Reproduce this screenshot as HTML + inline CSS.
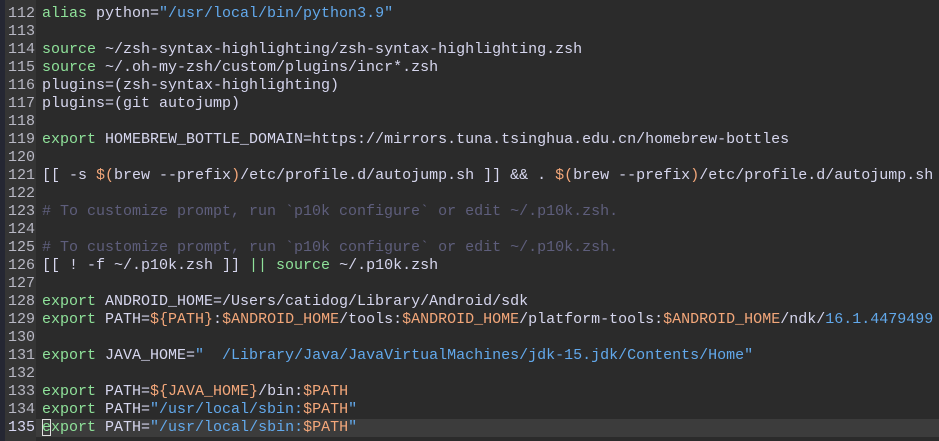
<html><head><style>
body{margin:0;width:939px;height:441px;background:#2b2b2b;overflow:hidden;font-family:"Liberation Mono",monospace;font-size:15px;}
#strip{position:absolute;left:0;top:0;width:5px;height:441px;background:#252733}
#gut{position:absolute;left:5px;top:0;width:31px;height:441px;background:#353535}
.l{position:absolute;left:0;width:939px;height:18px;line-height:18px;white-space:pre;color:#d6d6ee}
.n{position:absolute;left:7px;width:28px;text-align:right;color:#b8b8c4}
.t{position:absolute;left:42px}
.k{color:#8fe29a}.s{color:#62a9ec}.o{color:#f3a77a}.c{color:#5e5e7c}
.cur{background:#3c3c3c}
</style></head><body>
<div id="strip"></div><div id="gut"></div>
<div class="l" style="top:5px"><span class="n">112</span><span class="t"><span class="k">alias</span> python=<span class="s">"/usr/local/bin/python3.9"</span></span></div>
<div class="l" style="top:23px"><span class="n">113</span></div>
<div class="l" style="top:41px"><span class="n">114</span><span class="t"><span class="k">source</span> ~/zsh-syntax-highlighting/zsh-syntax-highlighting.zsh</span></div>
<div class="l" style="top:59px"><span class="n">115</span><span class="t"><span class="k">source</span> ~/.oh-my-zsh/custom/plugins/incr*.zsh</span></div>
<div class="l" style="top:77px"><span class="n">116</span><span class="t">plugins=(zsh-syntax-highlighting)</span></div>
<div class="l" style="top:95px"><span class="n">117</span><span class="t">plugins=(git autojump)</span></div>
<div class="l" style="top:113px"><span class="n">118</span></div>
<div class="l" style="top:131px"><span class="n">119</span><span class="t"><span class="k">export</span> HOMEBREW_BOTTLE_DOMAIN=https://mirrors.tuna.tsinghua.edu.cn/homebrew-bottles</span></div>
<div class="l" style="top:149px"><span class="n">120</span></div>
<div class="l" style="top:167px"><span class="n">121</span><span class="t">[[ -s <span class="o">$(</span>brew --prefix<span class="o">)</span>/etc/profile.d/autojump.sh ]] &amp;&amp; . <span class="o">$(</span>brew --prefix<span class="o">)</span>/etc/profile.d/autojump.sh</span></div>
<div class="l" style="top:185px"><span class="n">122</span></div>
<div class="l" style="top:203px"><span class="n">123</span><span class="t c"># To customize prompt, run `p10k configure` or edit ~/.p10k.zsh.</span></div>
<div class="l" style="top:221px"><span class="n">124</span></div>
<div class="l" style="top:239px"><span class="n">125</span><span class="t c"># To customize prompt, run `p10k configure` or edit ~/.p10k.zsh.</span></div>
<div class="l" style="top:257px"><span class="n">126</span><span class="t">[[ ! -f ~/.p10k.zsh ]] <span class="k">|| source</span> ~/.p10k.zsh</span></div>
<div class="l" style="top:275px"><span class="n">127</span></div>
<div class="l" style="top:293px"><span class="n">128</span><span class="t"><span class="k">export</span> ANDROID_HOME=/Users/catidog/Library/Android/sdk</span></div>
<div class="l" style="top:311px"><span class="n">129</span><span class="t"><span class="k">export</span> PATH=<span class="o">${PATH}</span>:<span class="o">$ANDROID_HOME</span>/tools:<span class="o">$ANDROID_HOME</span>/platform-tools:<span class="o">$ANDROID_HOME</span>/ndk/<span class="s">16.1.4479499</span></span></div>
<div class="l" style="top:329px"><span class="n">130</span></div>
<div class="l" style="top:347px"><span class="n">131</span><span class="t"><span class="k">export</span> JAVA_HOME=<span class="s">"  /Library/Java/JavaVirtualMachines/jdk-15.jdk/Contents/Home"</span></span></div>
<div class="l" style="top:365px"><span class="n">132</span></div>
<div class="l" style="top:383px"><span class="n">133</span><span class="t"><span class="k">export</span> PATH=<span class="o">${JAVA_HOME}</span>/bin:<span class="o">$PATH</span></span></div>
<div class="l" style="top:401px"><span class="n">134</span><span class="t"><span class="k">export</span> PATH=<span class="s">"/usr/local/sbin:<span class="o">$PATH</span>"</span></span></div>
<div class="l cur" style="top:419px;left:36px;width:903px"></div>
<div class="l" style="top:419px"><span class="n" style="color:#d8d8f4">135</span><span class="t"><span style="outline:1px solid #e0e0e0;outline-offset:-1px"><span class="k">e</span></span><span class="k">xport</span> PATH=<span class="s">"/usr/local/sbin:<span class="o">$PATH</span>"</span></span></div>
</body></html>
